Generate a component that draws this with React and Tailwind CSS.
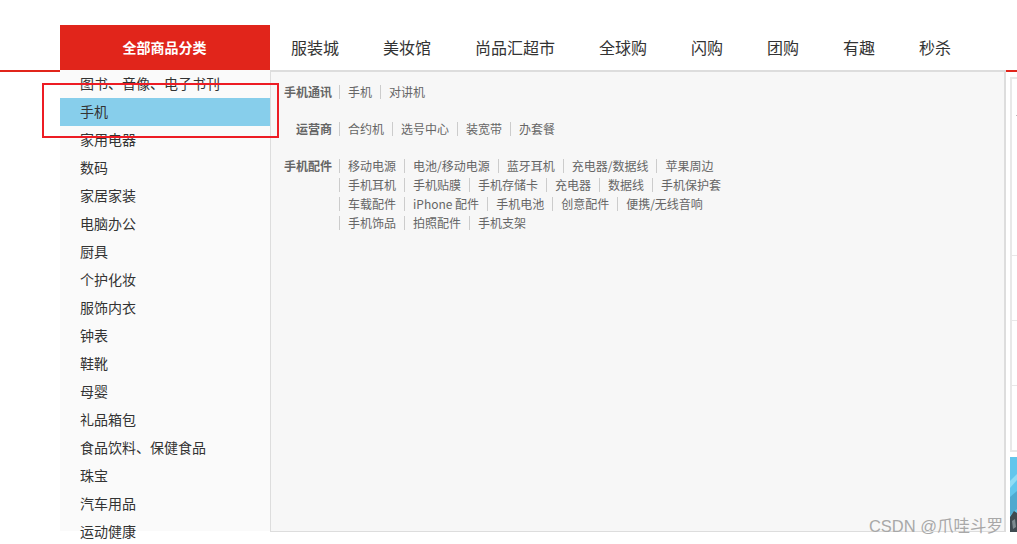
const navItems = ["服装城", "美妆馆", "尚品汇超市", "全球购", "闪购", "团购", "有趣", "秒杀"];

const categories = [
  "图书、音像、电子书刊",
  "手机",
  "家用电器",
  "数码",
  "家居家装",
  "电脑办公",
  "厨具",
  "个护化妆",
  "服饰内衣",
  "钟表",
  "鞋靴",
  "母婴",
  "礼品箱包",
  "食品饮料、保健食品",
  "珠宝",
  "汽车用品",
  "运动健康",
];

const groups = [
  { title: "手机通讯", links: ["手机", "对讲机"] },
  { title: "运营商", links: ["合约机", "选号中心", "装宽带", "办套餐"] },
  {
    title: "手机配件",
    links: [
      "移动电源", "电池/移动电源", "蓝牙耳机", "充电器/数据线", "苹果周边",
      "手机耳机", "手机贴膜", "手机存储卡", "充电器", "数据线", "手机保护套",
      "车载配件", "iPhone 配件", "手机电池", "创意配件", "便携/无线音响",
      "手机饰品", "拍照配件", "手机支架",
    ],
  },
];

// sliver of the carousel picture at the right edge
function Banner() {
  return (
    <svg width="7" height="75" viewBox="0 0 7 75" className="mt-[5px] block">
      <rect width="7" height="75" fill="#62c6ec" />
      <path d="M0 24 L7 17 L7 23 L0 31 Z" fill="#8fdcf5" />
      <path d="M0 40 L7 34 L7 52 L0 58 Z" fill="#4fa9cf" />
      <path d="M0 60 L4 54 L7 56 L7 75 L0 75 Z" fill="#3f4a50" />
      <path d="M2 64 L5 62 L6 70 L3 72 Z" fill="#7d8a8f" />
    </svg>
  );
}

export default function App() {
  return (
    <div className="relative h-[544px] overflow-hidden bg-white font-['Noto_Sans_CJK_SC','Noto_Sans',sans-serif] text-[#333]">
      {/* Top nav */}
      <div className="mt-[25px] flex h-[47px] border-b-2 border-[#e1251b] pl-[60px]">
        <div className="flex h-[45px] w-[210px] items-center justify-center bg-[#e1251b] pb-[2px] pr-px text-sm font-bold text-white">
          全部商品分类
        </div>
        <ul className="-ml-px flex h-[45px] items-center pb-[2px]">
          {navItems.map((item) => (
            <li key={item} className="px-[22px] text-base">
              {item}
            </li>
          ))}
        </ul>
      </div>

      <div className="relative -mt-[2px] flex pl-[60px]">
        {/* Category list */}
        <ul className="h-[461px] w-[210px] bg-[#fafafa]">
          {categories.map((name) => (
            <li
              key={name}
              className={`h-7 pl-5 text-sm leading-[26px] ${name === "手机" ? "bg-[#87ceeb]" : ""}`}
            >
              {name}
            </li>
          ))}
        </ul>

        {/* Sub menu panel */}
        <div className="h-[462px] w-[736px] border-2 border-b border-l border-[#ddd] bg-[#f7f7f7] pt-2">
          {groups.map((group) => (
            <dl key={group.title} className="mb-[18px] flex text-xs leading-[14px]">
              <dt className="mt-[5px] w-[68px] pr-[7px] text-right font-bold text-[#666]">{group.title}</dt>
              <dd className="flex w-[420px] flex-wrap text-[#666]">
                {group.links.map((link) => (
                  <a key={link} href="#" className="mt-[5px] h-[14px] border-l border-[#ccc] px-2">
                    {link}
                  </a>
                ))}
              </dd>
            </dl>
          ))}
        </div>

        {/* Right column peeking out */}
        <div className="ml-1 mt-[7px] flex w-[7px] flex-col">
          <div className="h-[375px] border-2 border-r-0 border-[#e8e8e8]">
            <div className="h-[177px] border-b border-[#e8e8e8] pl-1 pt-[36px]">
              <div className="h-px w-[2px] bg-[#bbb]"></div>
            </div>
            <div className="h-[65px] border-b border-[#e8e8e8]"></div>
            <div className="h-[65px] border-b border-[#e8e8e8]"></div>
          </div>
          <Banner />
        </div>
      </div>

      {/* Screenshot annotation */}
      <div className="absolute left-[42px] top-[83px] h-[55px] w-[237px] border-2 border-[#ed1c24]"></div>

      {/* Watermark */}
      <div className="absolute right-[14px] top-[514px] font-['Liberation_Sans','Noto_Sans_CJK_SC',sans-serif] text-[16.5px] text-[#a8a8a8]">
        CSDN @爪哇斗罗
      </div>
    </div>
  );
}
